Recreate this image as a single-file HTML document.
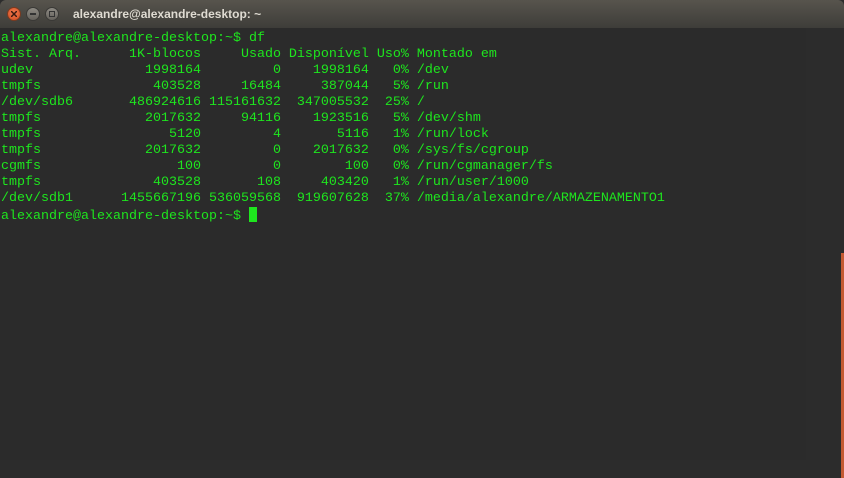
<!DOCTYPE html>
<html><head><style>
html,body{margin:0;padding:0;width:844px;height:478px;overflow:hidden;background:#2c2c2c}
.tb{position:absolute;left:0;top:0;width:844px;height:28px;background:linear-gradient(#57544d,#3e3d39);border-radius:6px 6px 0 0}
.title{position:absolute;left:73px;top:7px;font:bold 12px "Liberation Sans",sans-serif;color:#dfdbd2}
.btn{position:absolute;top:7px;width:14px;height:14px;border-radius:50%;box-sizing:border-box}
.term{position:absolute;left:0;top:28px;width:806px;height:432px;background:#2b2b2b}
pre{position:absolute;left:1px;top:31px;margin:0;font:13.33px/16px "Liberation Mono",monospace;color:#1ee61e}
.cur{display:inline-block;width:8px;height:15px;background:#1ee61e;vertical-align:-3px}
.sb{position:absolute;left:841px;top:253px;width:3px;height:225px;background:#c45a32}
</style></head><body>
<div class="term"></div>
<div class="tb">
<div class="btn" style="left:7px;background:radial-gradient(circle at 50% 40%,#f07a4f,#d04b1f);border:1px solid #7a3a20"></div>
<svg style="position:absolute;left:11px;top:11px" width="6" height="6"><path d="M0 0L6 6M6 0L0 6" stroke="#3a1a10" stroke-width="1.5"/></svg>
<div class="btn" style="left:26px;background:linear-gradient(#8d8a83,#65625c);border:1px solid #3a3936"></div>
<div style="position:absolute;left:30px;top:13px;width:6px;height:2px;background:#333"></div>
<div class="btn" style="left:45px;background:linear-gradient(#8d8a83,#65625c);border:1px solid #3a3936"></div>
<div style="position:absolute;left:49px;top:11px;width:4px;height:4px;border:1px solid #333"></div>
<div class="title">alexandre@alexandre-desktop: ~</div>
</div>
<pre>alexandre@alexandre-desktop:~$ df
Sist. Arq.      1K-blocos     Usado Disponível Uso% Montado em
udev              1998164         0    1998164   0% /dev
tmpfs              403528     16484     387044   5% /run
/dev/sdb6       486924616 115161632  347005532  25% /
tmpfs             2017632     94116    1923516   5% /dev/shm
tmpfs                5120         4       5116   1% /run/lock
tmpfs             2017632         0    2017632   0% /sys/fs/cgroup
cgmfs                 100         0        100   0% /run/cgmanager/fs
tmpfs              403528       108     403420   1% /run/user/1000
/dev/sdb1      1455667196 536059568  919607628  37% /media/alexandre/ARMAZENAMENTO1
alexandre@alexandre-desktop:~$ <span class="cur"></span></pre>
<div class="sb"></div>
</body></html>
